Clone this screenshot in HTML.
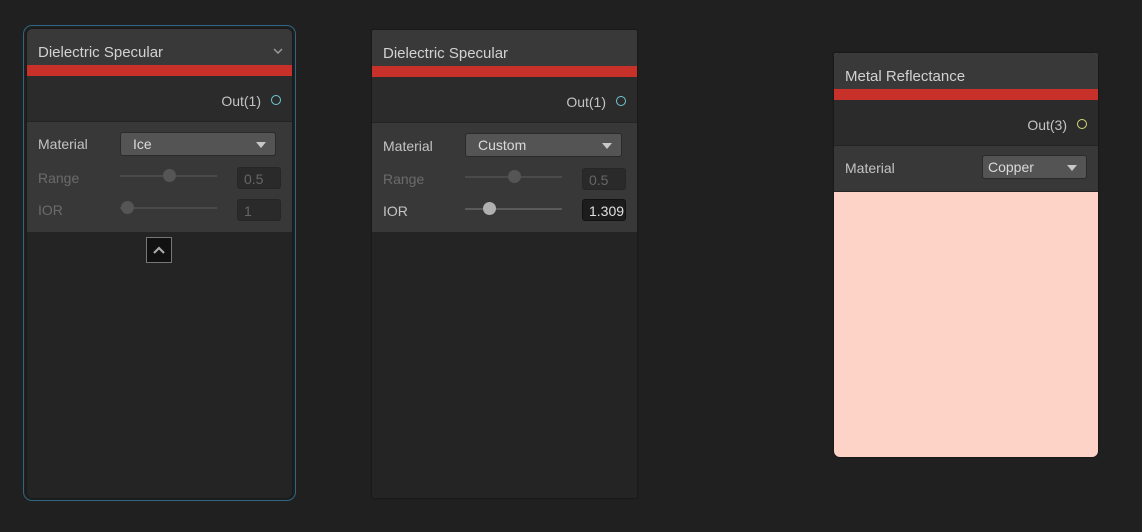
<!DOCTYPE html>
<html><head><style>
*{margin:0;padding:0;box-sizing:border-box}
body{width:1142px;height:532px;background:#202020;position:relative;overflow:hidden;font-family:"Liberation Sans",sans-serif;font-size:14px;color:#c4c4c4}
.abs{position:absolute}
.node{position:absolute;background:#242424;border-radius:5px;overflow:hidden;box-shadow:0 0 2px #111}
.title{position:absolute;left:0;right:0;top:0;height:36px;background:#393939;color:#d2d2d2;font-size:15px;padding:15px 0 0 11px}
.red{position:absolute;left:0;right:0;height:11px;background:#c8302a}
.out{position:absolute;left:0;right:0;height:46px;background:#2b2b2b;border-bottom:1px solid #232323}
.out span{position:absolute;right:31px;top:17px;font-size:14px}
.out i{position:absolute;right:11px;top:19px;width:10px;height:10px;border-radius:50%;border:1.5px solid #6fc9d4}
.ctl{position:absolute;left:0;right:0;background:#383838}
.lbl{position:absolute;left:11px;font-size:14px}
.dim{color:#6b6b6b}
.dd{position:absolute;height:24px;background:#545454;border-radius:3px;border:1px solid #2a2a2a;color:#dadada;padding:3px 0 0 12px;font-size:14px}
.dd:after{content:"";position:absolute;right:9px;top:9px;border-left:5px solid transparent;border-right:5px solid transparent;border-top:6px solid #c8c8c8}
.trk{position:absolute;height:2px;background:#4a4a4a}
.knob{position:absolute;width:13px;height:13px;border-radius:50%;background:#555}
.fld{position:absolute;width:44px;height:22px;background:#2a2a2a;border:1px solid #262626;border-radius:3px;padding:3px 0 0 6px;color:#666;overflow:hidden;white-space:nowrap}
</style></head><body>
<div class="abs" style="left:23px;top:25px;width:273px;height:476px;border:1.5px solid #2f6682;border-radius:9px"></div>

<div class="node" style="left:27px;top:29px;width:265px;height:469px">
 <div class="title">Dielectric Specular<svg class="abs" style="right:9px;top:19px" width="10" height="6"><path d="M1 1 L5 5 L9 1" stroke="#999" stroke-width="1.5" fill="none"/></svg></div>
 <div class="red" style="top:36px"></div>
 <div class="out" style="top:47px"><span>Out(1)</span><i></i></div>
 <div class="ctl" style="top:93px;height:110px">
  <div class="lbl" style="top:14px">Material</div>
  <div class="dd" style="left:93px;top:10px;width:156px">Ice</div>
  <div class="lbl dim" style="top:48px">Range</div>
  <div class="trk" style="left:93px;top:53px;width:97px"></div><div class="knob" style="left:136px;top:47px"></div>
  <div class="fld" style="left:210px;top:45px">0.5</div>
  <div class="lbl dim" style="top:80px">IOR</div>
  <div class="trk" style="left:93px;top:85px;width:97px"></div><div class="knob" style="left:94px;top:79px"></div>
  <div class="fld" style="left:210px;top:77px">1</div>
 </div>
 <div class="abs" style="left:119px;top:208px;width:26px;height:26px;background:#111;border:1px solid #777">
  <svg width="24" height="24" style="position:absolute;left:0;top:0"><path d="M7 15 L12 10 L17 15" stroke="#aaa" stroke-width="2.2" fill="none"/></svg>
 </div>
</div>

<div class="node" style="left:372px;top:30px;width:265px;height:468px;border-radius:2px">
 <div class="title">Dielectric Specular</div>
 <div class="red" style="top:36px"></div>
 <div class="out" style="top:47px"><span>Out(1)</span><i></i></div>
 <div class="ctl" style="top:93px;height:109px">
  <div class="lbl" style="top:15px">Material</div>
  <div class="dd" style="left:93px;top:10px;width:157px">Custom</div>
  <div class="lbl dim" style="top:48px">Range</div>
  <div class="trk" style="left:93px;top:53px;width:97px"></div><div class="knob" style="left:136px;top:47px"></div>
  <div class="fld" style="left:210px;top:45px">0.5</div>
  <div class="lbl" style="top:80px">IOR</div>
  <div class="trk" style="left:93px;top:85px;width:97px;background:#5a5a5a"></div><div class="knob" style="left:111px;top:79px;background:#b0b0b0"></div>
  <div class="fld" style="left:210px;top:76px;background:#1c1c1c;color:#e0e0e0;border-color:#111">1.309</div>
 </div>
</div>

<div class="node" style="left:834px;top:53px;width:264px;height:404px;background:#fcd3c6;border-radius:3px 3px 6px 6px">
 <div class="title">Metal Reflectance</div>
 <div class="red" style="top:36px"></div>
 <div class="out" style="top:47px"><span>Out(3)</span><i style="border-color:#d9d97a"></i></div>
 <div class="ctl" style="top:93px;height:46px;border-bottom:1px solid #252525">
  <div class="lbl" style="top:14px">Material</div>
  <div class="dd" style="left:148px;top:9px;width:105px;padding-left:5px">Copper</div>
 </div>
</div>
</body></html>
